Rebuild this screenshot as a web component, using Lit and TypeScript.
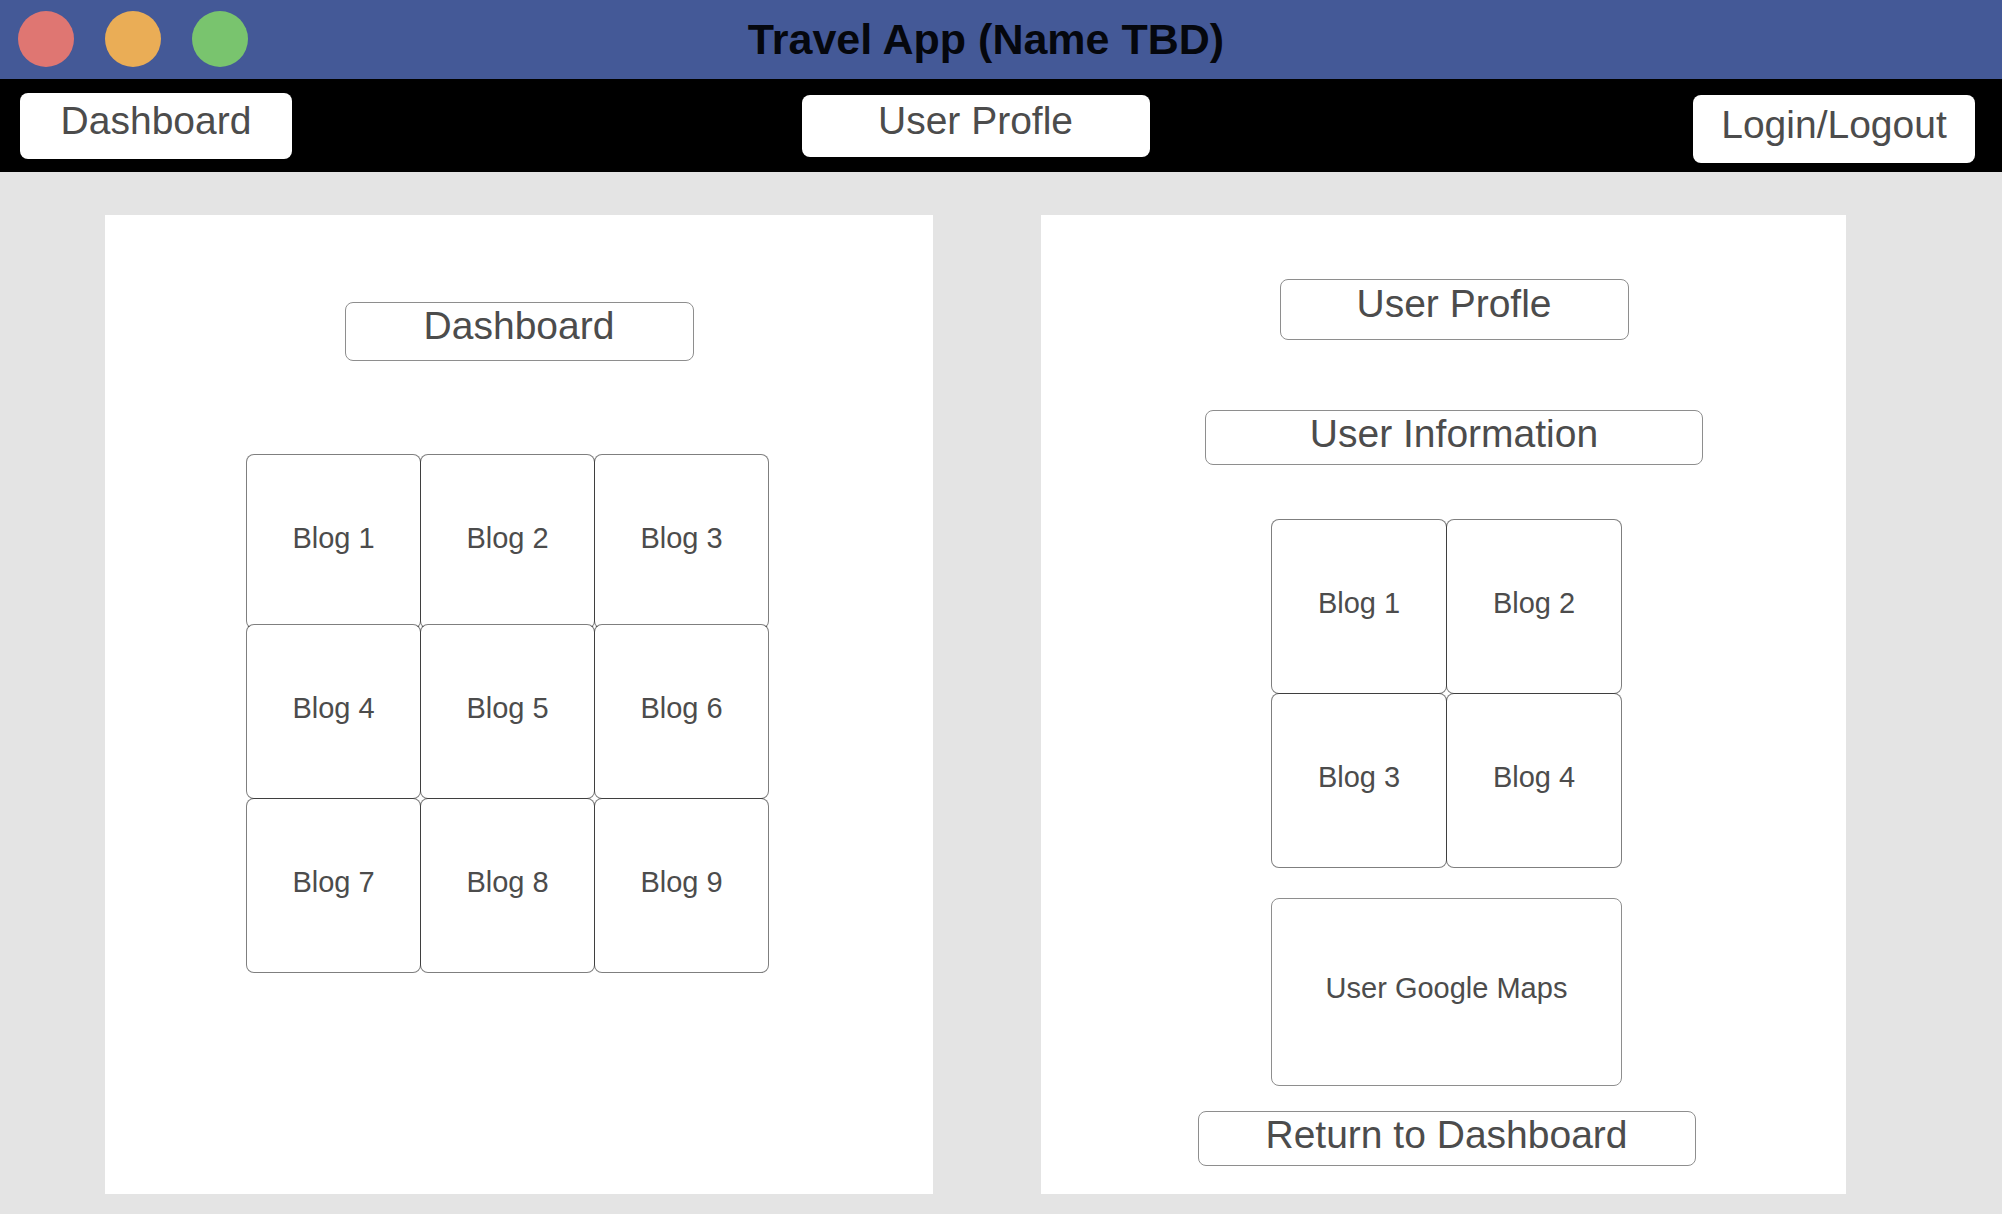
import { LitElement, html, css } from "lit";
import { customElement, property } from "lit/decorators.js";

@customElement("blog-grid")
class BlogGrid extends LitElement {
  @property({ type: Number }) count = 0;
  @property({ type: Number }) columns = 3;

  static styles = css`
    :host {
      display: block;
    }
    .grid {
      display: grid;
      grid-auto-rows: 174px;
      padding: 0 1px 1px 0;
    }
    .three {
      grid-template-columns: repeat(3, 174px);
      grid-template-rows: 170px;
    }
    .two {
      grid-template-columns: repeat(2, 175px);
    }
    .cell {
      box-sizing: border-box;
      margin-right: -1px;
      height: 175px;
      padding-bottom: 8px;
      display: flex;
      align-items: center;
      justify-content: center;
      border: 1px solid rgba(0, 0, 0, 0.5);
      border-radius: 8px;
      background: #fff;
      background-clip: padding-box;
      color: #4c4c4c;
      font-size: 29px;
      line-height: 34px;
      text-decoration: none;
    }
  `;

  render() {
    const items = Array.from({ length: this.count }, (_, i) => i + 1);
    return html`
      <div class="grid ${this.columns === 3 ? "three" : "two"}">
        ${items.map((n) => html`<a class="cell" href="#blog-${n}">Blog ${n}</a>`)}
      </div>
    `;
  }
}

@customElement("app-root")
class AppRoot extends LitElement {
  static styles = css`
    :host {
      display: flex;
      flex-direction: column;
      min-height: 100vh;
      background: #e4e4e4;
      color: #4c4c4c;
      font-family: "Liberation Sans", Arial, sans-serif;
      font-size: 39px;
      line-height: 45px;
    }
    h1,
    h2 {
      margin: 0;
      font: inherit;
    }
    button {
      margin: 0;
      font: inherit;
      color: inherit;
      cursor: pointer;
    }
    .titlebar {
      display: grid;
      grid-template-columns: 1fr auto 1fr;
      align-items: center;
      padding: 0 48px 0 18px;
      height: 79px;
      background: #445997;
    }
    .lights {
      display: flex;
      gap: 31px;
      padding-bottom: 2px;
    }
    .light {
      width: 56px;
      height: 56px;
      border-radius: 50%;
    }
    .red {
      background: #df7672;
    }
    .amber {
      background: #eaad56;
    }
    .green {
      background: #79c46e;
    }
    .title {
      padding-bottom: 2px;
      color: #05070d;
      font-size: 43px;
      font-weight: bold;
      line-height: 50px;
    }
    .nav {
      display: flex;
      align-items: center;
      justify-content: space-between;
      height: 93px;
      padding: 0 27px 0 20px;
      background: #000;
    }
    .tab {
      box-sizing: border-box;
      display: flex;
      justify-content: center;
      border: 0;
      border-radius: 8px;
      background: #fff;
      padding: 5px 0 0;
      width: 272px;
      height: 66px;
    }
    .tab.profile {
      width: 348px;
      height: 62px;
      margin-right: 34px;
      padding-top: 3px;
    }
    .tab.login {
      width: 282px;
      height: 68px;
      margin-top: 6px;
      padding-top: 7px;
    }
    .main {
      flex: 1;
      display: grid;
      grid-template-columns: 828fr 805fr;
      gap: 108px;
      padding: 43px 156px 20px 105px;
    }
    .panel {
      display: flex;
      flex-direction: column;
      align-items: center;
      background: #fff;
    }
    .dashboard {
      padding-top: 87px;
      gap: 93px;
    }
    .dashboard blog-grid {
      margin-right: 23px;
    }
    .user {
      padding: 64px 0 28px 6px;
    }
    .heads {
      display: flex;
      flex-direction: column;
      align-items: center;
      gap: 70px;
      padding-left: 15px;
      margin-bottom: 54px;
    }
    .label {
      box-sizing: border-box;
      width: 349px;
      height: 59px;
      display: flex;
      justify-content: center;
      padding: 0;
      border: 1px solid #8e8e8e;
      border-radius: 8px;
      background: #fff;
    }
    .tall {
      height: 61px;
      padding-top: 1px;
    }
    .wide {
      width: 498px;
      height: 55px;
    }
    .map {
      box-sizing: border-box;
      width: 351px;
      height: 188px;
      margin: 30px 0 25px;
      padding-bottom: 8px;
      display: flex;
      align-items: center;
      justify-content: center;
      border: 1px solid #8e8e8e;
      border-radius: 8px;
      font-size: 29px;
      line-height: 34px;
    }
  `;

  render() {
    return html`
      <header class="titlebar">
        <div class="lights">
          <span class="light red"></span>
          <span class="light amber"></span>
          <span class="light green"></span>
        </div>
        <h1 class="title">Travel App (Name TBD)</h1>
      </header>
      <nav class="nav">
        <button class="tab" type="button">Dashboard</button>
        <button class="tab profile" type="button">User Profle</button>
        <button class="tab login" type="button">Login/Logout</button>
      </nav>
      <main class="main">
        <section class="panel dashboard">
          <h2 class="label">Dashboard</h2>
          <blog-grid count="9" columns="3"></blog-grid>
        </section>
        <section class="panel user">
          <div class="heads">
            <h2 class="label tall">User Profle</h2>
            <h2 class="label wide">User Information</h2>
          </div>
          <blog-grid count="4" columns="2"></blog-grid>
          <div class="map">User Google Maps</div>
          <button class="label wide" type="button">Return to Dashboard</button>
        </section>
      </main>
    `;
  }
}
